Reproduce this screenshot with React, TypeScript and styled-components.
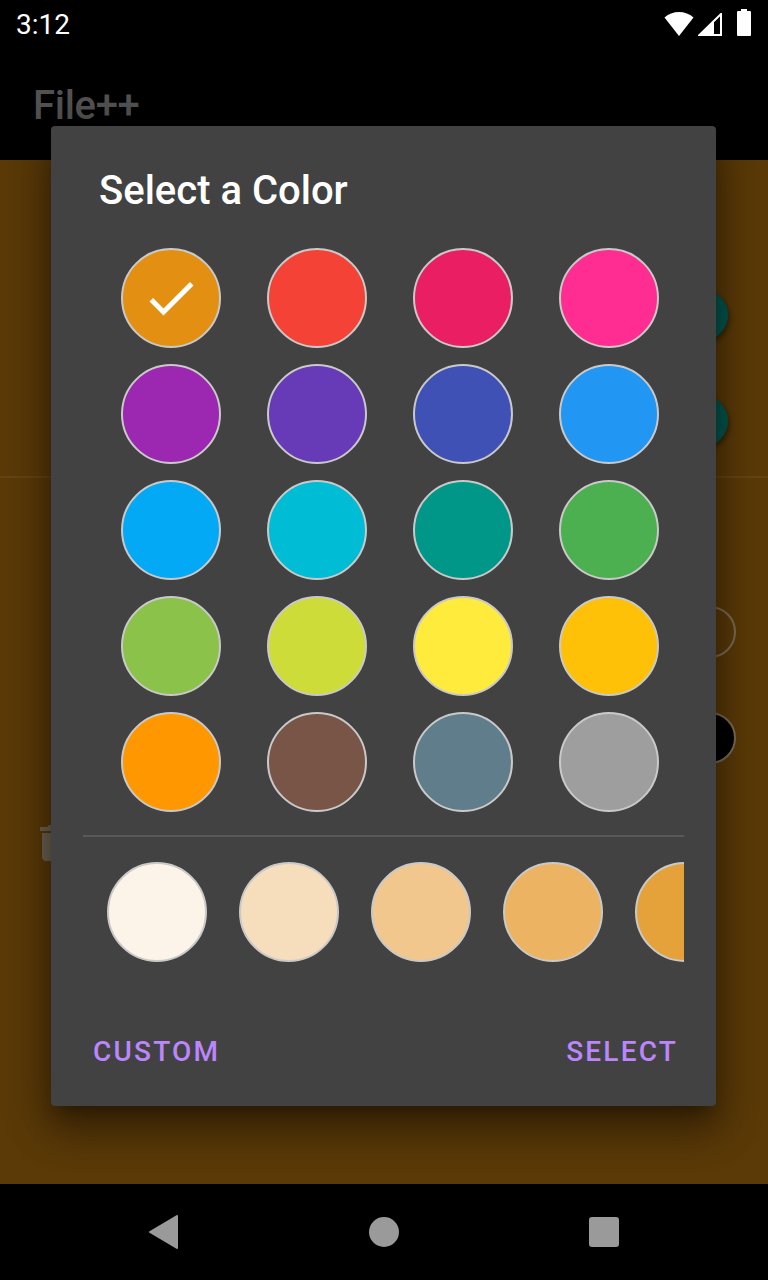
import React from "react";
import styled, { createGlobalStyle } from "styled-components";

const GlobalStyle = createGlobalStyle`
  html, body { margin: 0; padding: 0; background: #000; }
  body { font-family: Roboto, "Noto Sans", sans-serif; }
  * { box-sizing: border-box; }
`;

const Screen = styled.div`
  position: relative;
  width: 768px;
  height: 1280px;
  display: flex;
  flex-direction: column;
  background: #000;
  overflow: hidden;
`;

const StatusBar = styled.div`
  height: 48px;
  flex-shrink: 0;
  display: flex;
  align-items: flex-start;
  justify-content: space-between;
  padding: 9px 16px 0 16px;
  background: #000;
`;

const Time = styled.span`
  color: #fff;
  font-size: 28px;
  line-height: 32px;
  font-family: Roboto, sans-serif;
`;

const StatusIcons = styled.div`
  display: flex;
  align-items: flex-end;
  gap: 4px;
`;

const BatterySlot = styled.div`
  margin-left: 10px;
  display: flex;
`;

const AppBar = styled.div`
  height: 112px;
  flex-shrink: 0;
  padding: 34px 0 0 33px;
  background: #000;
`;

const AppTitle = styled.div`
  color: #525252;
  font-size: 40px;
  font-weight: 500;
  line-height: 48px;
  letter-spacing: -0.3px;
`;

const Content = styled.div`
  flex: 1;
  display: flex;
  flex-direction: column;
  background: #5b3a08;
`;

const Section = styled.div<{ $top: number }>`
  display: flex;
  flex-direction: column;
  padding-top: ${(p) => p.$top}px;
`;

const SettingRow = styled.div<{ $right: number }>`
  height: 106px;
  display: flex;
  align-items: center;
  justify-content: flex-end;
  padding-right: ${(p) => p.$right}px;
`;

const Fab = styled.div`
  width: 52px;
  height: 52px;
  border-radius: 50%;
  background: #00574e;
  box-shadow: 2px 3px 4px rgba(0, 0, 0, 0.35);
`;

const Swatch = styled.div<{ $fill: string }>`
  width: 52px;
  height: 52px;
  border-radius: 50%;
  background: ${(p) => p.$fill};
  border: 2px solid #7d6c55;
`;

const Divider = styled.div`
  height: 2px;
  margin-top: 2px;
  background: #654414;
`;

const TrashRow = styled.div`
  padding: 28px 0 0 30px;
  display: flex;
`;

const NavBar = styled.div`
  height: 96px;
  flex-shrink: 0;
  display: flex;
  align-items: center;
  justify-content: center;
  background: #000;
`;

const NavSlot = styled.div`
  width: 220px;
  display: flex;
  justify-content: center;
  align-items: center;
`;

const NavCircle = styled.div`
  width: 30px;
  height: 30px;
  border-radius: 50%;
  background: #9a9a9a;
`;

const NavSquare = styled.div`
  width: 30px;
  height: 30px;
  border-radius: 3px;
  background: #9a9a9a;
`;

const Dialog = styled.div`
  position: absolute;
  left: 51px;
  top: 126px;
  width: 665px;
  height: 980px;
  background: #424242;
  border-radius: 4px;
  display: flex;
  flex-direction: column;
  padding-top: 41px;
  box-shadow: 0 24px 38px 3px rgba(0, 0, 0, 0.28), 0 9px 46px 8px rgba(0, 0, 0, 0.22),
    0 11px 15px -7px rgba(0, 0, 0, 0.3);
`;

const DialogTitle = styled.h2`
  margin: 0;
  padding-left: 48px;
  color: #fff;
  font-size: 40px;
  font-weight: 500;
  line-height: 48px;
`;

const ColorGrid = styled.div`
  margin-top: 33px;
  padding-left: 70px;
  display: grid;
  grid-template-columns: repeat(4, 100px);
  column-gap: 46px;
  row-gap: 16px;
`;

const ColorDot = styled.div<{ $fill: string }>`
  width: 100px;
  height: 100px;
  flex-shrink: 0;
  border-radius: 50%;
  background: ${(p) => p.$fill};
  border: 2px solid #c9c9c9;
  display: flex;
  align-items: center;
  justify-content: center;
`;

const Separator = styled.div`
  margin: 23px 32px 0;
  height: 2px;
  background: #595959;
`;

const ShadeRow = styled.div`
  margin: 25px 32px 0;
  padding-left: 24px;
  display: flex;
  gap: 32px;
  overflow: hidden;
`;

const Actions = styled.div`
  margin-top: 72px;
  padding: 0 38px 0 42px;
  display: flex;
  justify-content: space-between;
`;

const TextButton = styled.button`
  background: none;
  border: none;
  padding: 0;
  color: #bb86fc;
  font-family: Roboto, sans-serif;
  font-size: 28px;
  font-weight: 500;
  line-height: 36px;
  letter-spacing: 2.2px;
  text-transform: uppercase;
`;

const palette = [
  "#e39012", "#f44336", "#e91e63", "#ff2d92",
  "#9c27b0", "#673ab7", "#3f51b5", "#2196f3",
  "#03a9f4", "#00bcd4", "#009688", "#4caf50",
  "#8bc34a", "#cddc39", "#ffeb3b", "#ffc107",
  "#ff9800", "#795548", "#607d8b", "#9e9e9e",
];

const shades = ["#fcf4e8", "#f6ddbb", "#f1c78d", "#ecb462", "#e6a23a"];

const Check = () => (
  <svg width="60" height="60" viewBox="0 0 24 24">
    <path fill="#fff" d="M9 16.17L4.83 12l-1.42 1.41L9 19 21 7l-1.41-1.41z" />
  </svg>
);

const Wifi = () => (
  <svg width="30" height="25" viewBox="0 0 30 25">
    <path fill="#fff" d="M15 25 L0.5 6.5 A21.75 21.75 0 0 1 29.5 6.5 Z" />
  </svg>
);

const Signal = () => (
  <svg width="24" height="23" viewBox="0 0 24 23">
    <path fill="none" stroke="#fff" strokeWidth="2" strokeLinejoin="miter" d="M1.5 22 L23 1 L23 22 Z" />
    <path fill="#fff" d="M1 22.5 L16 7.8 L16 22.5 Z" />
  </svg>
);

const Battery = () => (
  <svg width="16" height="27" viewBox="0 0 16 27">
    <rect x="5" y="0" width="6" height="3" fill="#fff" />
    <rect x="1" y="2" width="14" height="25" rx="1" fill="#fff" />
  </svg>
);

const Trash = () => (
  <svg width="48" height="48" viewBox="0 0 24 24">
    <path
      fill="#6e6454"
      d="M6 19c0 1.1.9 2 2 2h8c1.1 0 2-.9 2-2V7H6v12zM19 4h-3.5l-1-1h-5l-1 1H5v2h14V4z"
    />
  </svg>
);

const Back = () => (
  <svg width="32" height="34" viewBox="0 0 32 34">
    <path
      fill="#9a9a9a"
      stroke="#9a9a9a"
      strokeWidth="2"
      strokeLinejoin="round"
      d="M29 1 L29 33 L2 17 Z"
    />
  </svg>
);

export default function App() {
  return (
    <>
      <GlobalStyle />
      <Screen>
        <StatusBar>
          <Time>3:12</Time>
          <StatusIcons>
            <Wifi />
            <Signal />
            <BatterySlot>
              <Battery />
            </BatterySlot>
          </StatusIcons>
        </StatusBar>
        <AppBar>
          <AppTitle>File++</AppTitle>
        </AppBar>
        <Content>
          <Section $top={102}>
            <SettingRow $right={40}>
              <Fab />
            </SettingRow>
            <SettingRow $right={40}>
              <Fab />
            </SettingRow>
          </Section>
          <Divider />
          <Section $top={101}>
            <SettingRow $right={32}>
              <Swatch $fill="transparent" />
            </SettingRow>
            <SettingRow $right={32}>
              <Swatch $fill="#000" />
            </SettingRow>
          </Section>
          <TrashRow>
            <Trash />
          </TrashRow>
        </Content>
        <NavBar>
          <NavSlot>
            <Back />
          </NavSlot>
          <NavSlot>
            <NavCircle />
          </NavSlot>
          <NavSlot>
            <NavSquare />
          </NavSlot>
        </NavBar>

        <Dialog>
          <DialogTitle>Select a Color</DialogTitle>
          <ColorGrid>
            {palette.map((c, i) => (
              <ColorDot key={c} $fill={c}>
                {i === 0 && <Check />}
              </ColorDot>
            ))}
          </ColorGrid>
          <Separator />
          <ShadeRow>
            {shades.map((c) => (
              <ColorDot key={c} $fill={c} />
            ))}
          </ShadeRow>
          <Actions>
            <TextButton>Custom</TextButton>
            <TextButton>Select</TextButton>
          </Actions>
        </Dialog>
      </Screen>
    </>
  );
}
